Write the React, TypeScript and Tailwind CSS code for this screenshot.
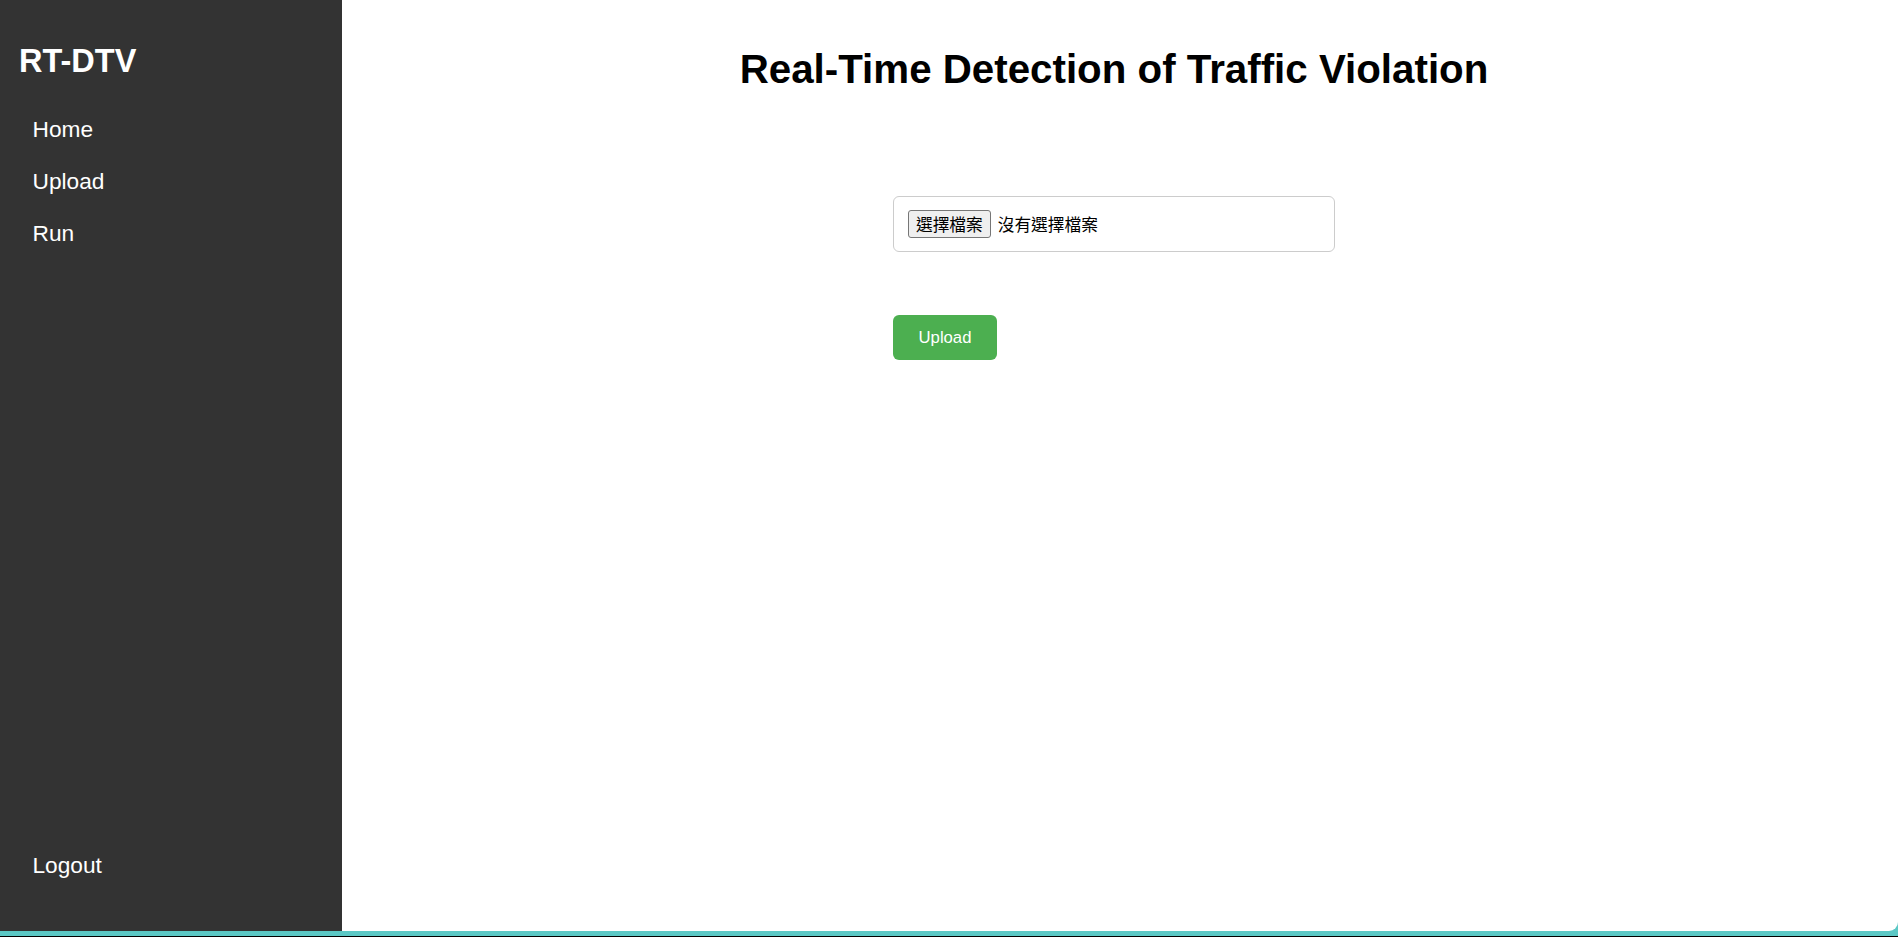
import React from "react";

export default function App() {
  const sans = { fontFamily: '"Liberation Sans", Arial, sans-serif' };
  return (
    <div className="h-[937px] w-full bg-[#5bc8c5] flex flex-col overflow-hidden" style={sans}>
      <div className="h-[931px] w-full flex bg-white rounded-br-[9px] overflow-hidden">
        <aside className="w-[342px] shrink-0 bg-[#333333] text-white flex flex-col pt-[37px] pb-[40px]">
          <div className="pl-[19px] text-[32.5px] font-bold leading-normal">RT-DTV</div>
          <nav className="mt-[17px] flex flex-col">
            {["Home", "Upload", "Run"].map((t) => (
              <a key={t} className="pl-[32.5px] text-[22.7px] leading-[52.33px] text-white">
                {t}
              </a>
            ))}
          </nav>
          <div className="mt-auto">
            <a className="block pl-[32.5px] text-[22.7px] leading-[52.33px] text-white">Logout</a>
          </div>
        </aside>
        <main className="flex-1 pt-[40px] pr-[12px] flex flex-col items-center">
          <h1 className="text-[40.3px] font-bold leading-normal text-black m-0">
            Real-Time Detection of Traffic Violation
          </h1>
          <div className="mt-[96px] w-[442px] flex flex-col items-start">
            <div className="w-full h-[56px] border border-[#cccccc] rounded-[6px] flex items-center pl-[14px]">
              <span
                className="h-[28px] px-[7px] flex items-center bg-[#efefef] border border-[#767676] rounded-[3px] text-[16.7px] text-black"
                style={{ fontFamily: '"Noto Sans CJK TC", sans-serif' }}
              >
                選擇檔案
              </span>
              <span
                className="ml-[7px] text-[16.7px] text-black"
                style={{ fontFamily: '"Noto Sans CJK TC", sans-serif' }}
              >
                沒有選擇檔案
              </span>
            </div>
            <button className="mt-[63px] h-[45px] w-[104px] rounded-[6px] bg-[#4caf50] text-white text-[16.7px] flex items-center justify-center">
              Upload
            </button>
          </div>
        </main>
      </div>
      <div className="h-[5px]" />
      <div className="h-[1px] bg-black" />
    </div>
  );
}
